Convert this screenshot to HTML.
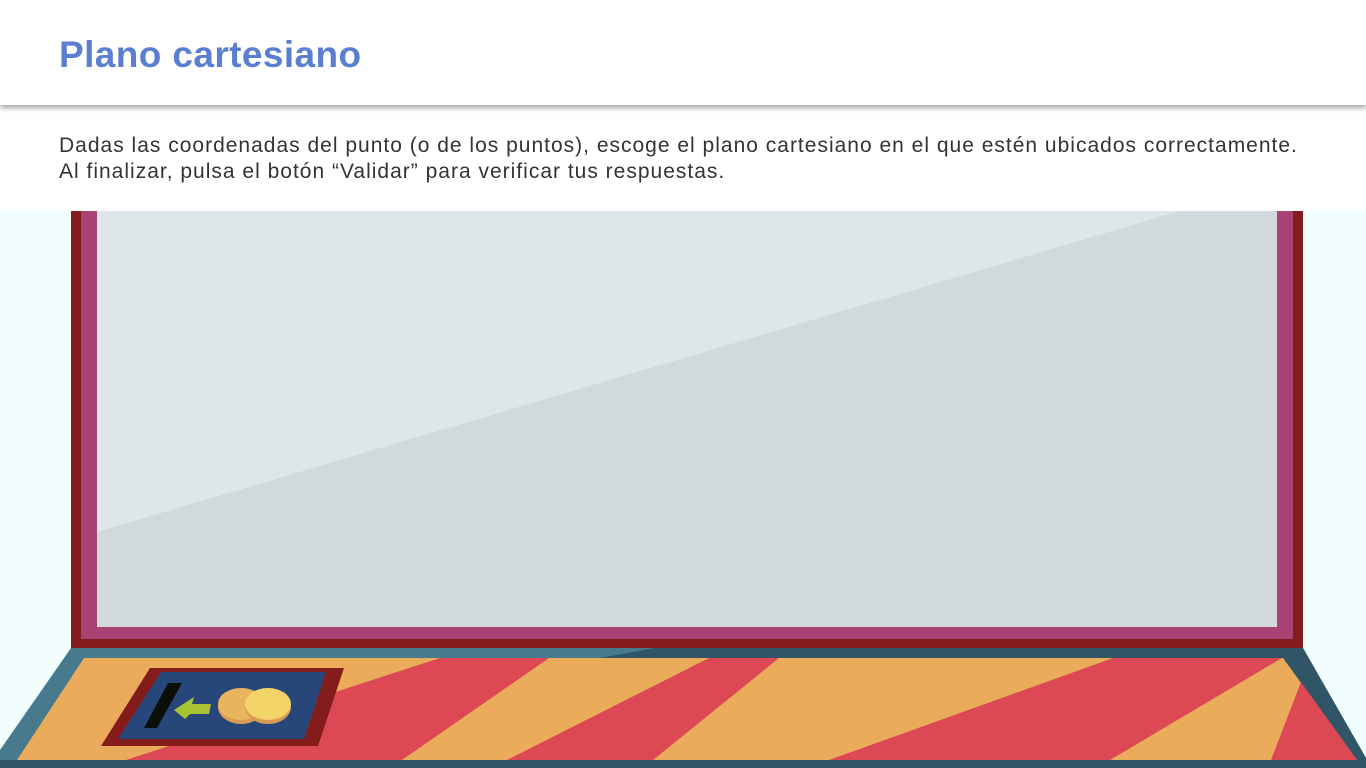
<!DOCTYPE html>
<html><head><meta charset="utf-8"><style>
html,body{margin:0;padding:0;width:1366px;height:768px;overflow:hidden;background:#f2fefe;font-family:"Liberation Sans",Arial,sans-serif}
.hdr{position:absolute;left:0;top:0;width:1366px;height:105px;background:#fff;box-shadow:0 3px 5px rgba(0,0,0,0.35);z-index:2}
.hdr h1{position:absolute;left:59px;top:34px;margin:0;font-size:37px;font-weight:bold;color:#5a7fd0;line-height:42px;letter-spacing:0.4px}
.txt{position:absolute;left:0;top:105px;width:1366px;height:106px;background:#fff}
.txt p{position:absolute;left:59px;top:28px;margin:0;font-size:21px;line-height:26px;color:#333;white-space:nowrap;letter-spacing:1px}
svg{position:absolute;left:0;top:0}
</style></head><body>
<div class="hdr"><h1>Plano cartesiano</h1></div>
<div class="txt"><p>Dadas las coordenadas del punto (o de los puntos), escoge el plano cartesiano en el que estén ubicados correctamente.<br>Al finalizar, pulsa el botón “Validar” para verificar tus respuestas.</p></div>
<svg width="1366" height="768" viewBox="0 0 1366 768">
<rect x="71" y="211" width="1232" height="437" fill="#831c1b"/>
<rect x="81" y="211" width="1212" height="428" fill="#a84373"/>
<rect x="97" y="211" width="1180" height="416" fill="#d1d9dc"/>
<polygon points="97,211 1180,211 97,532" fill="#dfe6e7"/>
<polygon points="71,648 1303,648 1366,758 1366,768 0,768 0,750" fill="#467a8c"/>
<polygon points="655,648 1303,648 1366,758 1366,768 1300,768 1283,658 600,658" fill="#2f5566"/>
<polygon points="84,658 1283,658 1357,760 17,760" fill="#eaac5b"/>
<polygon points="440,658 549,658 402,760 126,760" fill="#dc4853"/>
<polygon points="709,658 779,658 653,760 507,760" fill="#dc4853"/>
<polygon points="1113,658 1282,658 1110,760 829,760" fill="#dc4853"/>
<polygon points="1301,682 1357,760 1271,760" fill="#dc4853"/>
<rect x="0" y="760" width="1366" height="8" fill="#2f5566"/>
<polygon points="150,668 344,668 318,746 101,746" fill="#831c1b"/>
<polygon points="161,672 326,672 304,739 118,739" fill="#27477a"/>
<polygon points="168,683 182,683 157,728 144,728" fill="#0a0f08"/>
<polygon points="174,710 194,697 192,704 211,704 209,714 190,714 185,719" fill="#a9c233"/>
<ellipse cx="241" cy="707" rx="23" ry="17" fill="#d99a55"/>
<ellipse cx="241" cy="704" rx="23" ry="16" fill="#e8b45e"/>
<ellipse cx="268" cy="707" rx="23" ry="17" fill="#d99a55"/>
<ellipse cx="268" cy="704" rx="23" ry="16" fill="#f3d468"/>
</svg>
</body></html>
